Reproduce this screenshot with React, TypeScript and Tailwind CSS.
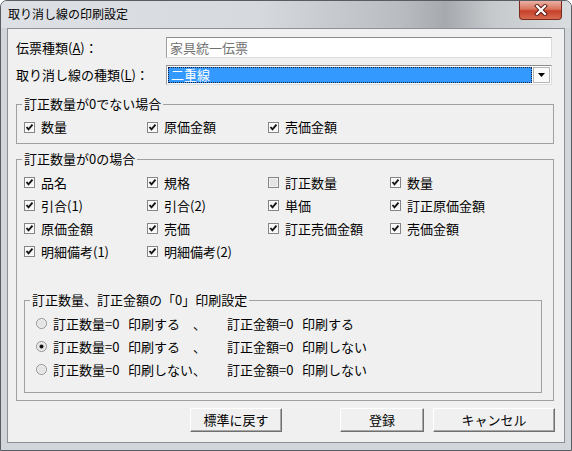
import React from "react";

function CheckBox({ checked }: { checked: boolean }) {
  return (
    <svg width="11" height="11" viewBox="0 0 11 11" className="shrink-0">
      <rect x="0.5" y="0.5" width="10" height="10" fill="#ffffff" stroke="#858585" />
      <rect x="1.5" y="1.5" width="8" height="8" fill={checked ? "#f7f7f7" : "#e3e3e3"} />
      {checked && (
        <path d="M2.5 5 L4.5 7.4 L8.5 2.7" fill="none" stroke="#141414" strokeWidth="1.9" />
      )}
    </svg>
  );
}

function Radio({ checked }: { checked: boolean }) {
  return (
    <svg width="11" height="11" viewBox="0 0 11 11" className="shrink-0">
      <circle cx="5.5" cy="5.5" r="5" fill="#f4f4f4" stroke="#8f8f8f" />
      <circle cx="5.5" cy="5.5" r="3.6" fill="#e4e4e4" />
      {checked && <circle cx="5.5" cy="5.5" r="2" fill="#141414" />}
    </svg>
  );
}

function Check({ label, checked = true }: { label: string; checked?: boolean }) {
  return (
    <div className="flex items-center h-[16px] whitespace-nowrap">
      <CheckBox checked={checked} />
      <span className="ml-[6px]">{label}</span>
    </div>
  );
}

function RadioRow({ checked, a, b }: { checked: boolean; a: string; b: string }) {
  return (
    <div className="flex items-center h-[23px] ml-[11px] whitespace-nowrap">
      <Radio checked={checked} />
      <span className="ml-[6px] inline-block w-[174px]">
        訂正数量<span className="inline-block w-[23px]">=0</span>
        {a}
      </span>
      <span>
        訂正金額<span className="inline-block w-[23px]">=0</span>
        {b}
      </span>
    </div>
  );
}

const groupBorder = "border border-[#a0a0a0]";

export default function App() {
  return (
    <div className="w-[572px] h-[451px] font-['Noto_Sans_CJK_JP','Noto_Sans',sans-serif] text-black">
      <div className="w-[572px] h-[451px] border border-[#585d63] rounded-t-[7px] bg-[#d2d6da] flex flex-col overflow-hidden">
        {/* title bar */}
        <div className="h-[27px] shrink-0 flex justify-between bg-[linear-gradient(to_right,#dde1e5_0%,#d6dade_45%,#b9bcc0_70%,#a6a9ad_78%,#c6c9cc_86%,#dadde0_100%)]">
          <div className="pl-[7px] pt-[5px] text-[12px] leading-[16px]">取り消し線の印刷設定</div>
          <div className="mr-[9px] w-[43px] h-[19px] rounded-b-[4px] border border-t-0 border-[#7a2a1c] bg-[linear-gradient(to_bottom,#eab1a4_0%,#d9745d_45%,#c5412a_55%,#d66a4f_100%)] flex items-center justify-center">
            <svg width="14" height="12" viewBox="0 0 14 12">
              <path d="M3 2 L11 10 M11 2 L3 10" stroke="#5a1a10" strokeWidth="4" strokeLinecap="square" />
              <path d="M3 2 L11 10 M11 2 L3 10" stroke="#ffffff" strokeWidth="2.2" strokeLinecap="square" />
            </svg>
          </div>
        </div>
        {/* client */}
        <div className="mx-[6px] h-[415px] shrink-0 border border-[#8b9096] bg-[#f0f0f0] text-[13px] leading-[16px] pl-[8px] flex flex-col">
          {/* row 1 */}
          <div className="mt-[8px] h-[21px] flex items-center">
            <div className="w-[150px] whitespace-nowrap">
              伝票種類(<span className="underline">A</span>)：
            </div>
            <div className="w-[386px] h-[21px] border border-t-[#8c8c8c] border-l-[#a0a0a0] border-r-[#dcdcdc] border-b-[#dcdcdc] bg-white flex items-center pl-[3px] text-[#707070]">
              家具統一伝票
            </div>
          </div>
          {/* row 2 */}
          <div className="mt-[7px] h-[20px] flex items-center">
            <div className="w-[150px] whitespace-nowrap">
              取り消し線の種類(<span className="underline">L</span>)：
            </div>
            <div className="w-[386px] h-[20px] border border-t-[#8c8c8c] border-l-[#a0a0a0] border-r-[#dcdcdc] border-b-[#dcdcdc] bg-white flex p-[1px]">
              <div className="flex-1 bg-[#3399ff] border border-dotted border-[#1a1a3a] text-white flex items-center pl-[2px]">
                二重線
              </div>
              <div className="w-[17px] ml-[1px] border border-[#b5b5b5] bg-[#fafafa] flex items-center justify-center">
                <svg width="7" height="4" viewBox="0 0 7 4">
                  <path d="M0 0 L7 0 L3.5 4 Z" fill="#000" />
                </svg>
              </div>
            </div>
          </div>
          {/* group 1 */}
          <fieldset className={`mt-[11px] w-[538px] ${groupBorder} pt-[7px] pb-[8px]`}>
            <legend className="ml-[5px] px-[2px] leading-[16px]">訂正数量が0でない場合</legend>
            <div className="grid grid-cols-[123px_121px_122px_1fr] pl-[7px]">
              <Check label="数量" />
              <Check label="原価金額" />
              <Check label="売価金額" />
            </div>
          </fieldset>
          {/* group 2 */}
          <fieldset className={`mt-[7px] w-[538px] ${groupBorder} pt-[4px] pb-[7px]`}>
            <legend className="ml-[5px] px-[2px] leading-[16px]">訂正数量が0の場合</legend>
            <div className="grid grid-cols-[123px_121px_122px_1fr] auto-rows-[23px] items-center pl-[7px]">
              <Check label="品名" />
              <Check label="規格" />
              <Check label="訂正数量" checked={false} />
              <Check label="数量" />
              <Check label="引合(1)" />
              <Check label="引合(2)" />
              <Check label="単価" />
              <Check label="訂正原価金額" />
              <Check label="原価金額" />
              <Check label="売価" />
              <Check label="訂正売価金額" />
              <Check label="売価金額" />
              <Check label="明細備考(1)" />
              <Check label="明細備考(2)" />
            </div>
            <fieldset className={`mt-[29px] ml-[7px] w-[518px] ${groupBorder} pt-[4px] pb-[11px]`}>
              <legend className="ml-[5px] px-[2px] leading-[16px]">訂正数量、訂正金額の「0」印刷設定</legend>
              <RadioRow checked={false} a="印刷する　、" b="印刷する" />
              <RadioRow checked={true} a="印刷する　、" b="印刷しない" />
              <RadioRow checked={false} a="印刷しない、" b="印刷しない" />
            </fieldset>
          </fieldset>
          {/* buttons */}
          <div className="mt-[7px] flex">
            <button className="ml-[174px] w-[92px] h-[24px] border border-t-white border-l-white border-r-[#6f6f6f] border-b-[#6f6f6f] shadow-[inset_-1px_-1px_0_#a8a8a8] bg-[#f0f0f0] text-[13px] leading-[16px]">
              標準に戻す
            </button>
            <button className="ml-[58px] w-[84px] h-[24px] border border-t-white border-l-white border-r-[#6f6f6f] border-b-[#6f6f6f] shadow-[inset_-1px_-1px_0_#a8a8a8] bg-[#f0f0f0] text-[13px] leading-[16px]">
              登録
            </button>
            <button className="ml-[9px] w-[122px] h-[24px] border border-t-white border-l-white border-r-[#6f6f6f] border-b-[#6f6f6f] shadow-[inset_-1px_-1px_0_#a8a8a8] bg-[#f0f0f0] text-[13px] leading-[16px]">
              キャンセル
            </button>
          </div>
        </div>
      </div>
    </div>
  );
}
